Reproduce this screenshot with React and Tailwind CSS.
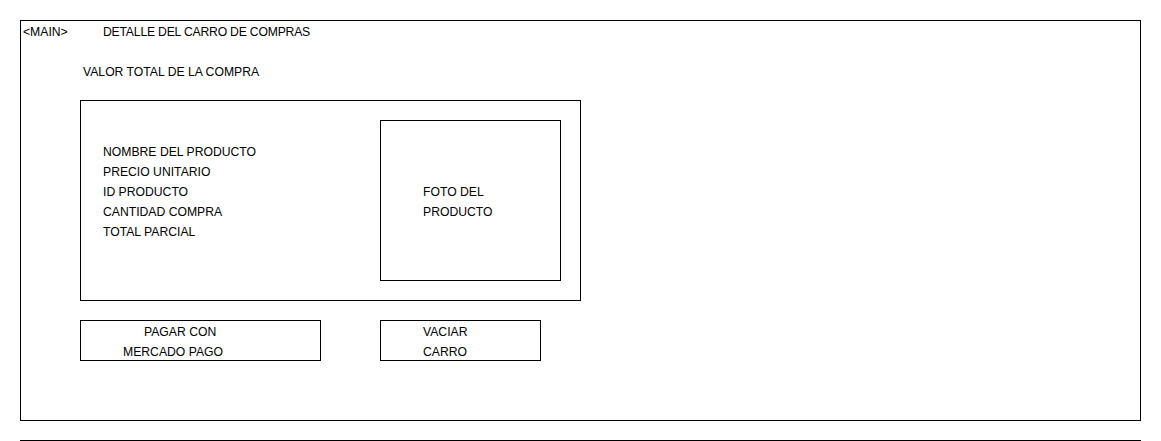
import React from 'react';

const detalle = ['NOMBRE DEL PRODUCTO', 'PRECIO UNITARIO', 'ID PRODUCTO', 'CANTIDAD COMPRA', 'TOTAL PARCIAL'];

function App() {
    return (
        <div className="w-[1161px] h-[441px] bg-white text-black text-[12.2px] leading-[22px] font-['Liberation_Sans',Arial,sans-serif] overflow-hidden">
            <div className="ml-[20px] mt-[20px] w-[1121px] h-[401px] border border-black">
                {/* encabezado */}
                <div className="flex h-[20px]">
                    <span className="pl-[2px] w-[82px]">&lt;MAIN&gt;</span>
                    <span className="tracking-[-0.2px]">DETALLE DEL CARRO DE COMPRAS</span>
                </div>

                <div className="mt-[20px] h-[20px] pl-[62px]">VALOR TOTAL DE LA COMPRA</div>

                {/* producto */}
                <div className="ml-[59px] mt-[19px] w-[501px] h-[201px] border border-black flex">
                    <div className="w-[299px] pl-[22px] pt-[40px]">
                        {detalle.map((d) => (
                            <div key={d} className="h-[20px]">{d}</div>
                        ))}
                    </div>
                    <div className="mt-[19px] w-[181px] h-[161px] border border-black pl-[42px] pt-[60px]">
                        <div className="h-[20px]">FOTO DEL</div>
                        <div className="h-[20px]">PRODUCTO</div>
                    </div>
                </div>

                {/* botones */}
                <div className="flex ml-[59px] mt-[19px]">
                    <div className="w-[241px] h-[41px] border border-black">
                        <div className="h-[20px] pl-[63px]">PAGAR CON</div>
                        <div className="h-[20px] pl-[42px]">MERCADO PAGO</div>
                    </div>
                    <div className="ml-[59px] w-[161px] h-[41px] border border-black pl-[42px]">
                        <div className="h-[20px]">VACIAR</div>
                        <div className="h-[20px]">CARRO</div>
                    </div>
                </div>
            </div>
            <div className="ml-[20px] mt-[19px] w-[1121px] h-px bg-black" />
        </div>
    );
}

export default App;
